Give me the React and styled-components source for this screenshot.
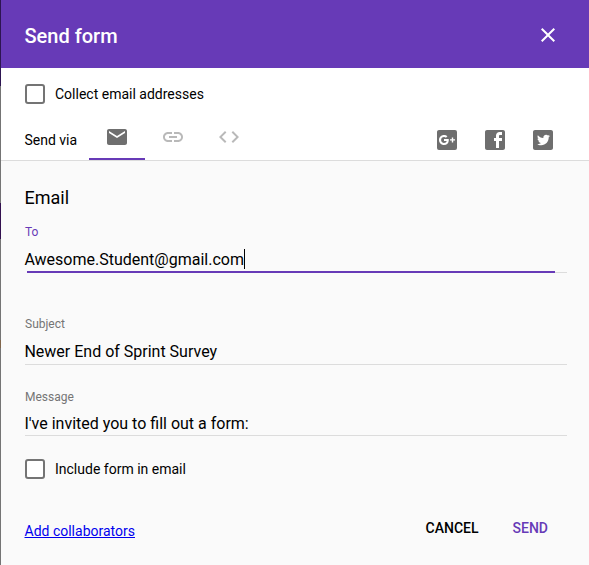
import React from "react";
import styled, { createGlobalStyle } from "styled-components";

const GlobalStyle = createGlobalStyle`
  *, *::before, *::after { box-sizing: border-box; }
  html, body { margin: 0; padding: 0; overflow: hidden; }
  body { font-family: Roboto, Arial, sans-serif; color: #000; }
`;

const Page = styled.div`
  display: flex;
  width: 589px;
  height: 565px;
`;

const Backdrop = styled.div`
  width: 1px;
  flex: none;
  background: linear-gradient(
    #2d1552 0 86px, #747474 86px 203px, #32104f 203px 239px,
    #747474 239px 340px, #80664b 340px 348px, #747474 348px
  );
`;

const Dialog = styled.main`
  flex: 1;
  display: flex;
  flex-direction: column;
  background: #fff;
`;

const Header = styled.header`
  height: 68px;
  padding: 4px 29px 0 24px;
  display: flex;
  align-items: center;
  justify-content: space-between;
  background: #673ab7;
  color: #fff;
`;

const Title = styled.h1`
  margin: 0;
  font-size: 20px;
  line-height: 24px;
  font-weight: 500;
  text-indent: -0.5px;
`;

const IconButton = styled.button`
  display: flex;
  padding: 0;
  margin-top: -2px;
  border: 0;
  background: none;
  color: inherit;
`;

const Icon = styled.svg`
  display: block;
  width: 24px;
  height: 24px;
  fill: currentColor;
`;

const CheckRow = styled.label`
  display: flex;
  align-items: center;
  gap: 10px;
  height: 20px;
  font-size: 14px;
  line-height: 20px;
`;

const Collect = styled.div`
  padding: 16px 24px 0;
  height: 46px;
`;

const Checkbox = styled.input`
  appearance: none;
  width: 20px;
  height: 20px;
  margin: 0;
  border: 2px solid #747474;
  border-radius: 3px;
  background: #fff;
`;

const SendBar = styled.div`
  display: flex;
  height: 47px;
  padding: 0 34px 0 24px;
  border-bottom: 1px solid #dcdcdc;
`;

const SendLabel = styled.span`
  width: 64px;
  padding-top: 16px;
  font-size: 14px;
  line-height: 20px;
  text-indent: -0.5px;
`;

const Tabs = styled.nav`
  display: flex;
`;

const Tab = styled.button`
  width: 56px;
  height: 46px;
  padding: 11px 16px 0;
  display: flex;
  border: 0;
  border-bottom: 2px solid ${(p) => (p.$active ? "#673ab7" : "transparent")};
  background: none;
  color: ${(p) => (p.$active ? "#6f6f6f" : "#b9b9b9")};
`;

const Social = styled.div`
  display: flex;
  gap: 24px;
  margin-left: auto;
  padding-top: 14px;
  color: #6e6e6e;
`;

const Body = styled.section`
  flex: 1;
  display: flex;
  flex-direction: column;
  padding: 25px 21px 0 24px;
  background: #fafafa;
`;

const SectionTitle = styled.h2`
  margin: 0;
  font-size: 18px;
  line-height: 24px;
  font-weight: 400;
  text-indent: -0.5px;
`;

const Field = styled.div`
  display: flex;
  flex-direction: column;
  width: 542px;
  margin-top: ${(p) => p.$space}px;
`;

const FieldLabel = styled.span`
  font-size: 12px;
  line-height: 16px;
  color: ${(p) => (p.$focused ? "#673ab7" : "#757575")};
`;

const Value = styled.div`
  display: flex;
  align-items: flex-start;
  height: 20px;
  margin-top: ${(p) => p.$gap}px;
  font-size: 16px;
  line-height: 22px;
  white-space: nowrap;
  text-indent: -0.6px;
`;

const Caret = styled.span`
  width: 1px;
  height: 20px;
  margin-left: 0.4px;
  background: #000;
`;

const Rule = styled.div`
  height: 1px;
  margin-top: ${(p) => p.$gap}px;
  background: #dcdcdc;
`;

const FocusRule = styled.div`
  display: flex;
  align-items: center;
  height: 2px;
  margin: 2px 0 0 2px;
  &::before {
    content: "";
    width: 528px;
    height: 2px;
    background: #673ab7;
  }
  &::after {
    content: "";
    flex: 1;
    height: 1px;
    margin-top: 1px;
    background: #dcdcdc;
  }
`;

const IncludeRow = styled.div`
  margin-top: 23px;
`;

const Footer = styled.footer`
  display: flex;
  align-items: flex-start;
  margin-top: 39px;
  font-size: 14px;
  line-height: 20px;
`;

const Link = styled.a`
  margin: 3px auto 0 -0.5px;
  color: #0000ee;
  text-decoration: underline;
`;

const Action = styled.button`
  padding: 0;
  margin: 0 ${(p) => p.$after}px 0 0;
  border: 0;
  background: none;
  font: 500 14px/20px Roboto, Arial, sans-serif;
  color: ${(p) => (p.$primary ? "#673ab7" : "#000")};
`;

const paths = {
  close:
    "M19 6.41L17.59 5 12 10.59 6.41 5 5 6.41 10.59 12 5 17.59 6.41 19 12 13.41 17.59 19 19 17.59 13.41 12z",
  mail:
    "M20 4H4c-1.1 0-1.99.9-1.99 2L2 18c0 1.1.9 2 2 2h16c1.1 0 2-.9 2-2V6c0-1.1-.9-2-2-2zm0 4l-8 5-8-5V6l8 5 8-5v2z",
  link:
    "M3.9 12c0-1.71 1.39-3.1 3.1-3.1h4V7H7c-2.76 0-5 2.24-5 5s2.24 5 5 5h4v-1.9H7c-1.71 0-3.1-1.39-3.1-3.1zM8 13h8v-2H8v2zm9-6h-4v1.9h4c1.71 0 3.1 1.39 3.1 3.1s-1.39 3.1-3.1 3.1h-4V17h4c2.76 0 5-2.24 5-5s-2.24-5-5-5z",
  embed:
    "M9.4 16.6L4.8 12l4.6-4.6L8 6l-6 6 6 6 1.4-1.4zm5.2 0l4.6-4.6-4.6-4.6L16 6l6 6-6 6-1.4-1.4z",
  googlePlus:
    "M20 2A2 2 0 0 1 22 4V20A2 2 0 0 1 20 22H4A2 2 0 0 1 2 20V4C2 2.89 2.9 2 4 2H20M20 11.2H18.2V9.4H16.8V11.2H15V12.6H16.8V14.4H18.2V12.6H20V11.2M9 11.1V13H11.7C11.4 14.2 10.5 14.95 9 14.95C7.4 14.95 6.1 13.65 6.1 12C6.1 10.35 7.4 9.05 9 9.05C9.8 9.05 10.45 9.35 10.95 9.8L12.4 8.35C11.5 7.5 10.36 7 9 7C6.21 7 4 9.21 4 12C4 14.79 6.21 17 9 17C11.86 17 13.79 15 13.79 12.14C13.79 11.79 13.76 11.4 13.7 11.1H9Z",
  facebook:
    "M20 2H4c-1.1 0-1.99.9-1.99 2L2 20c0 1.1.9 2 2 2h16c1.1 0 2-.9 2-2V4c0-1.1-.9-2-2-2zm-1 2v3h-2c-.55 0-1 .45-1 1v2h3v3h-3v7h-3v-7h-2v-3h2V7.5C13 5.57 14.57 4 16.5 4H19z",
  twitter:
    "M20 2H4C2.9 2 2 2.9 2 4V20C2 21.1 2.9 22 4 22H20C21.1 22 22 21.1 22 20V4C22 2.9 21.1 2 20 2M17.71 9.33C17.64 13.95 14.69 17.11 10.28 17.31C8.46 17.39 7.15 16.81 6 16.08C7.34 16.29 9 15.76 9.9 15C8.58 14.86 7.81 14.19 7.44 13.12C7.82 13.18 8.22 13.16 8.58 13.09C7.39 12.69 6.54 11.95 6.5 10.41C6.83 10.57 7.18 10.71 7.64 10.74C6.75 10.23 6.1 8.38 6.85 7.16C8.17 8.61 9.76 9.79 12.37 9.95C11.71 7.15 15.42 5.63 16.97 7.5C17.63 7.38 18.16 7.14 18.68 6.86C18.47 7.5 18.06 7.97 17.56 8.33C18.1 8.26 18.59 8.13 19 7.92C18.75 8.45 18.19 8.93 17.71 9.33Z",
};

const Glyph = ({ name }) => (
  <Icon viewBox="0 0 24 24" aria-hidden="true">
    <path fillRule="evenodd" d={paths[name]} />
  </Icon>
);

export default function App() {
  return (
    <Page>
      <GlobalStyle />
      <Backdrop />
      <Dialog>
        <Header>
          <Title>Send form</Title>
          <IconButton aria-label="Close">
            <Glyph name="close" />
          </IconButton>
        </Header>
        <Collect>
          <CheckRow>
            <Checkbox type="checkbox" />
            Collect email addresses
          </CheckRow>
        </Collect>
        <SendBar>
          <SendLabel>Send via</SendLabel>
          <Tabs>
            <Tab $active aria-label="Email"><Glyph name="mail" /></Tab>
            <Tab aria-label="Link"><Glyph name="link" /></Tab>
            <Tab aria-label="Embed"><Glyph name="embed" /></Tab>
          </Tabs>
          <Social>
            <Glyph name="googlePlus" />
            <Glyph name="facebook" />
            <Glyph name="twitter" />
          </Social>
        </SendBar>
        <Body>
          <SectionTitle>Email</SectionTitle>
          <Field $space={14}>
            <FieldLabel $focused>To</FieldLabel>
            <Value $gap={9}>
              Awesome.Student@gmail.com
              <Caret />
            </Value>
            <FocusRule />
          </Field>
          <Field $space={43}>
            <FieldLabel>Subject</FieldLabel>
            <Value $gap={9}>Newer End of Sprint Survey</Value>
            <Rule $gap={3} />
          </Field>
          <Field $space={24}>
            <FieldLabel>Message</FieldLabel>
            <Value $gap={8}>I've invited you to fill out a form:</Value>
            <Rule $gap={2} />
          </Field>
          <IncludeRow>
            <CheckRow>
              <Checkbox type="checkbox" />
              Include form in email
            </CheckRow>
          </IncludeRow>
          <Footer>
            <Link href="#">Add collaborators</Link>
            <Action $after={34}>CANCEL</Action>
            <Action $primary $after={20}>SEND</Action>
          </Footer>
        </Body>
      </Dialog>
    </Page>
  );
}
